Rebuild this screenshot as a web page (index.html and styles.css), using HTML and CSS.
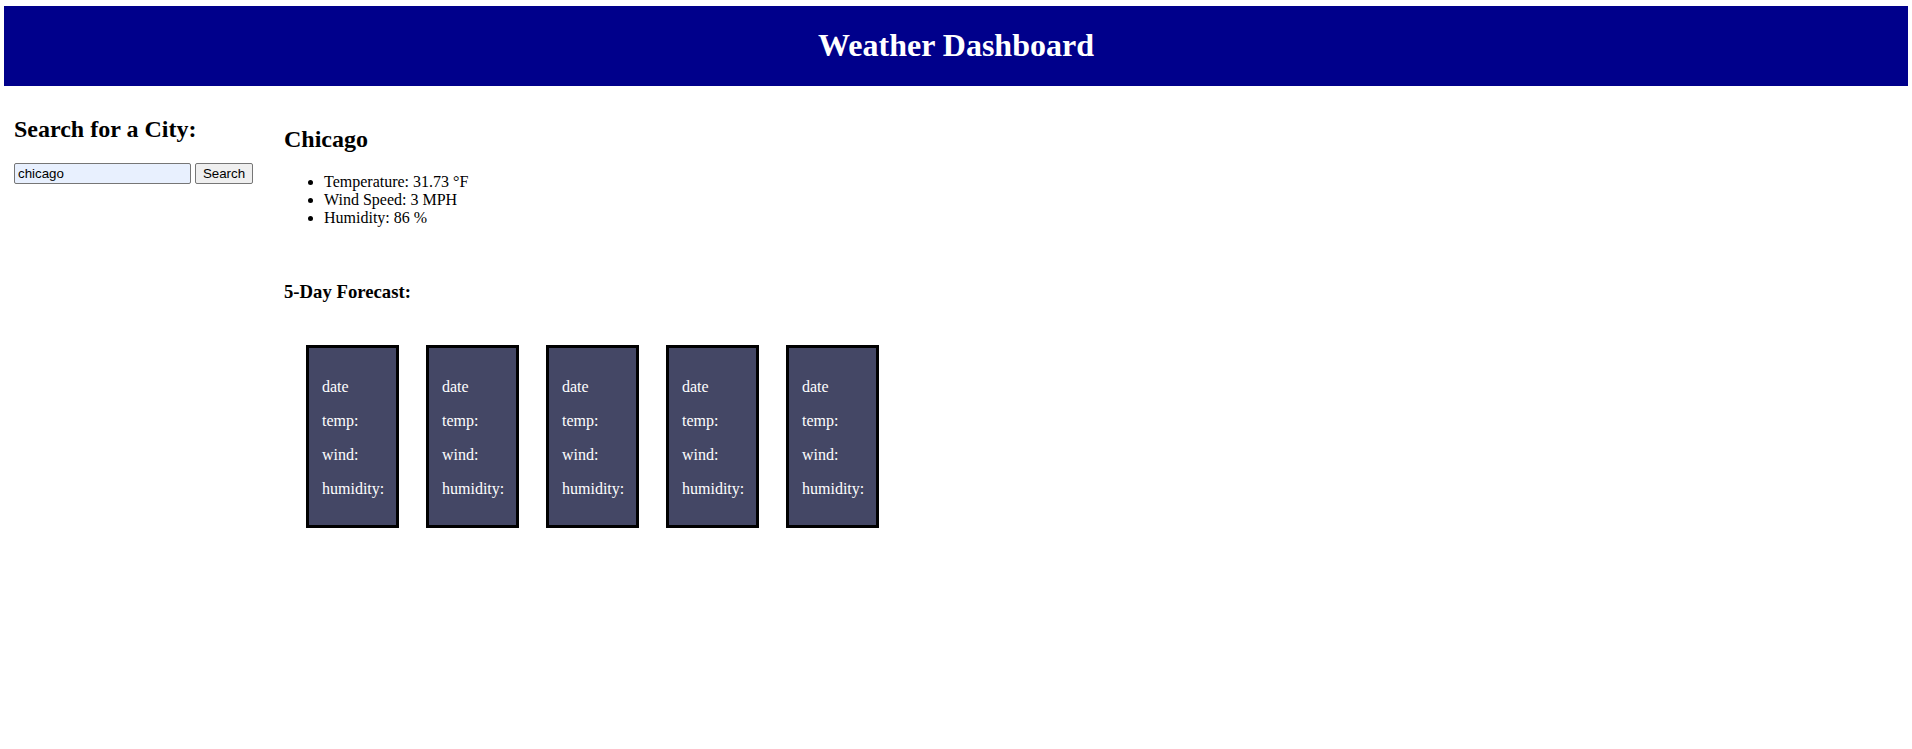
FILE: index.html
```html
<!DOCTYPE html>
<html lang="en">
<head>
<meta charset="utf-8">
<title>Weather Dashboard</title>
<link rel="stylesheet" href="styles.css">
</head>
<body>
<header class="site-header">
  <h1 class="site-title">Weather Dashboard</h1>
</header>
<main class="layout">
  <aside class="search-panel">
    <h2 class="panel-title">Search for a City:</h2>
    <form class="search-form">
      <input class="search-input" type="text" value="chicago">
      <button class="search-btn" type="button">Search</button>
    </form>
  </aside>
  <section class="weather">
    <h2 class="city-name">Chicago</h2>
    <ul class="current-list">
      <li>Temperature: 31.73 °F</li>
      <li>Wind Speed: 3 MPH</li>
      <li>Humidity: 86 %</li>
    </ul>
    <h3 class="forecast-title">5-Day Forecast:</h3>
    <div class="cards">
      <div class="card"><p>date</p><p>temp:</p><p>wind:</p><p>humidity:</p></div>
      <div class="card"><p>date</p><p>temp:</p><p>wind:</p><p>humidity:</p></div>
      <div class="card"><p>date</p><p>temp:</p><p>wind:</p><p>humidity:</p></div>
      <div class="card"><p>date</p><p>temp:</p><p>wind:</p><p>humidity:</p></div>
      <div class="card"><p>date</p><p>temp:</p><p>wind:</p><p>humidity:</p></div>
    </div>
  </section>
</main>
</body>
</html>
```

FILE: styles.css
```css
html, body {
  margin: 0;
  padding: 0;
  background: #ffffff;
}
body {
  padding: 6px 4px 0;
  font-family: "Liberation Serif", "Times New Roman", serif;
  font-size: 16px;
  color: #000;
}
.site-header {
  background: #00008b;
  height: 80px;
  box-sizing: border-box;
  padding-top: 21px;
}
.site-title {
  margin: 0;
  text-align: center;
  color: #ffffff;
  font-size: 32px;
  line-height: 37px;
  font-weight: bold;
}
.layout {
  display: flex;
  align-items: flex-start;
}
.search-panel {
  width: 280px;
  flex-shrink: 0;
  padding-left: 10px;
  box-sizing: border-box;
}
.panel-title {
  margin: 29px 0 0;
  font-size: 24px;
  line-height: 28px;
  font-weight: bold;
}
.search-form {
  display: flex;
  gap: 4px;
  margin-top: 20px;
}
.search-input {
  width: 177px;
  height: 21px;
  box-sizing: border-box;
  border: 1px solid #767676;
  border-radius: 2px;
  background: #e8f0fe;
  padding: 1px 3px;
  font-family: "Liberation Sans", Arial, sans-serif;
  font-size: 13.333px;
  color: #000;
  margin: 0;
}
.search-btn {
  width: 58px;
  height: 21px;
  box-sizing: border-box;
  border: 1px solid #767676;
  border-radius: 2px;
  background: #efefef;
  padding: 1px 6px;
  font-family: "Liberation Sans", Arial, sans-serif;
  font-size: 13.333px;
  color: #000;
  margin: 0;
}
.weather {
  flex: 1;
}
.city-name {
  margin: 39px 0 0;
  font-size: 24px;
  line-height: 28px;
  font-weight: bold;
}
.current-list {
  margin: 20px 0 0;
  padding-left: 40px;
  line-height: 18px;
}
.forecast-title {
  margin: 54px 0 0;
  font-size: 18.72px;
  line-height: 22px;
  font-weight: bold;
}
.cards {
  display: flex;
  gap: 27px;
  padding-left: 22px;
  margin-top: 42px;
}
.card {
  width: 93px;
  box-sizing: border-box;
  border: 3px solid #000;
  background: #444765;
  color: #ffffff;
  padding: 30px 13px 27px;
  display: flex;
  flex-direction: column;
  gap: 16px;
}
.card p {
  margin: 0;
  line-height: 18px;
}
```
